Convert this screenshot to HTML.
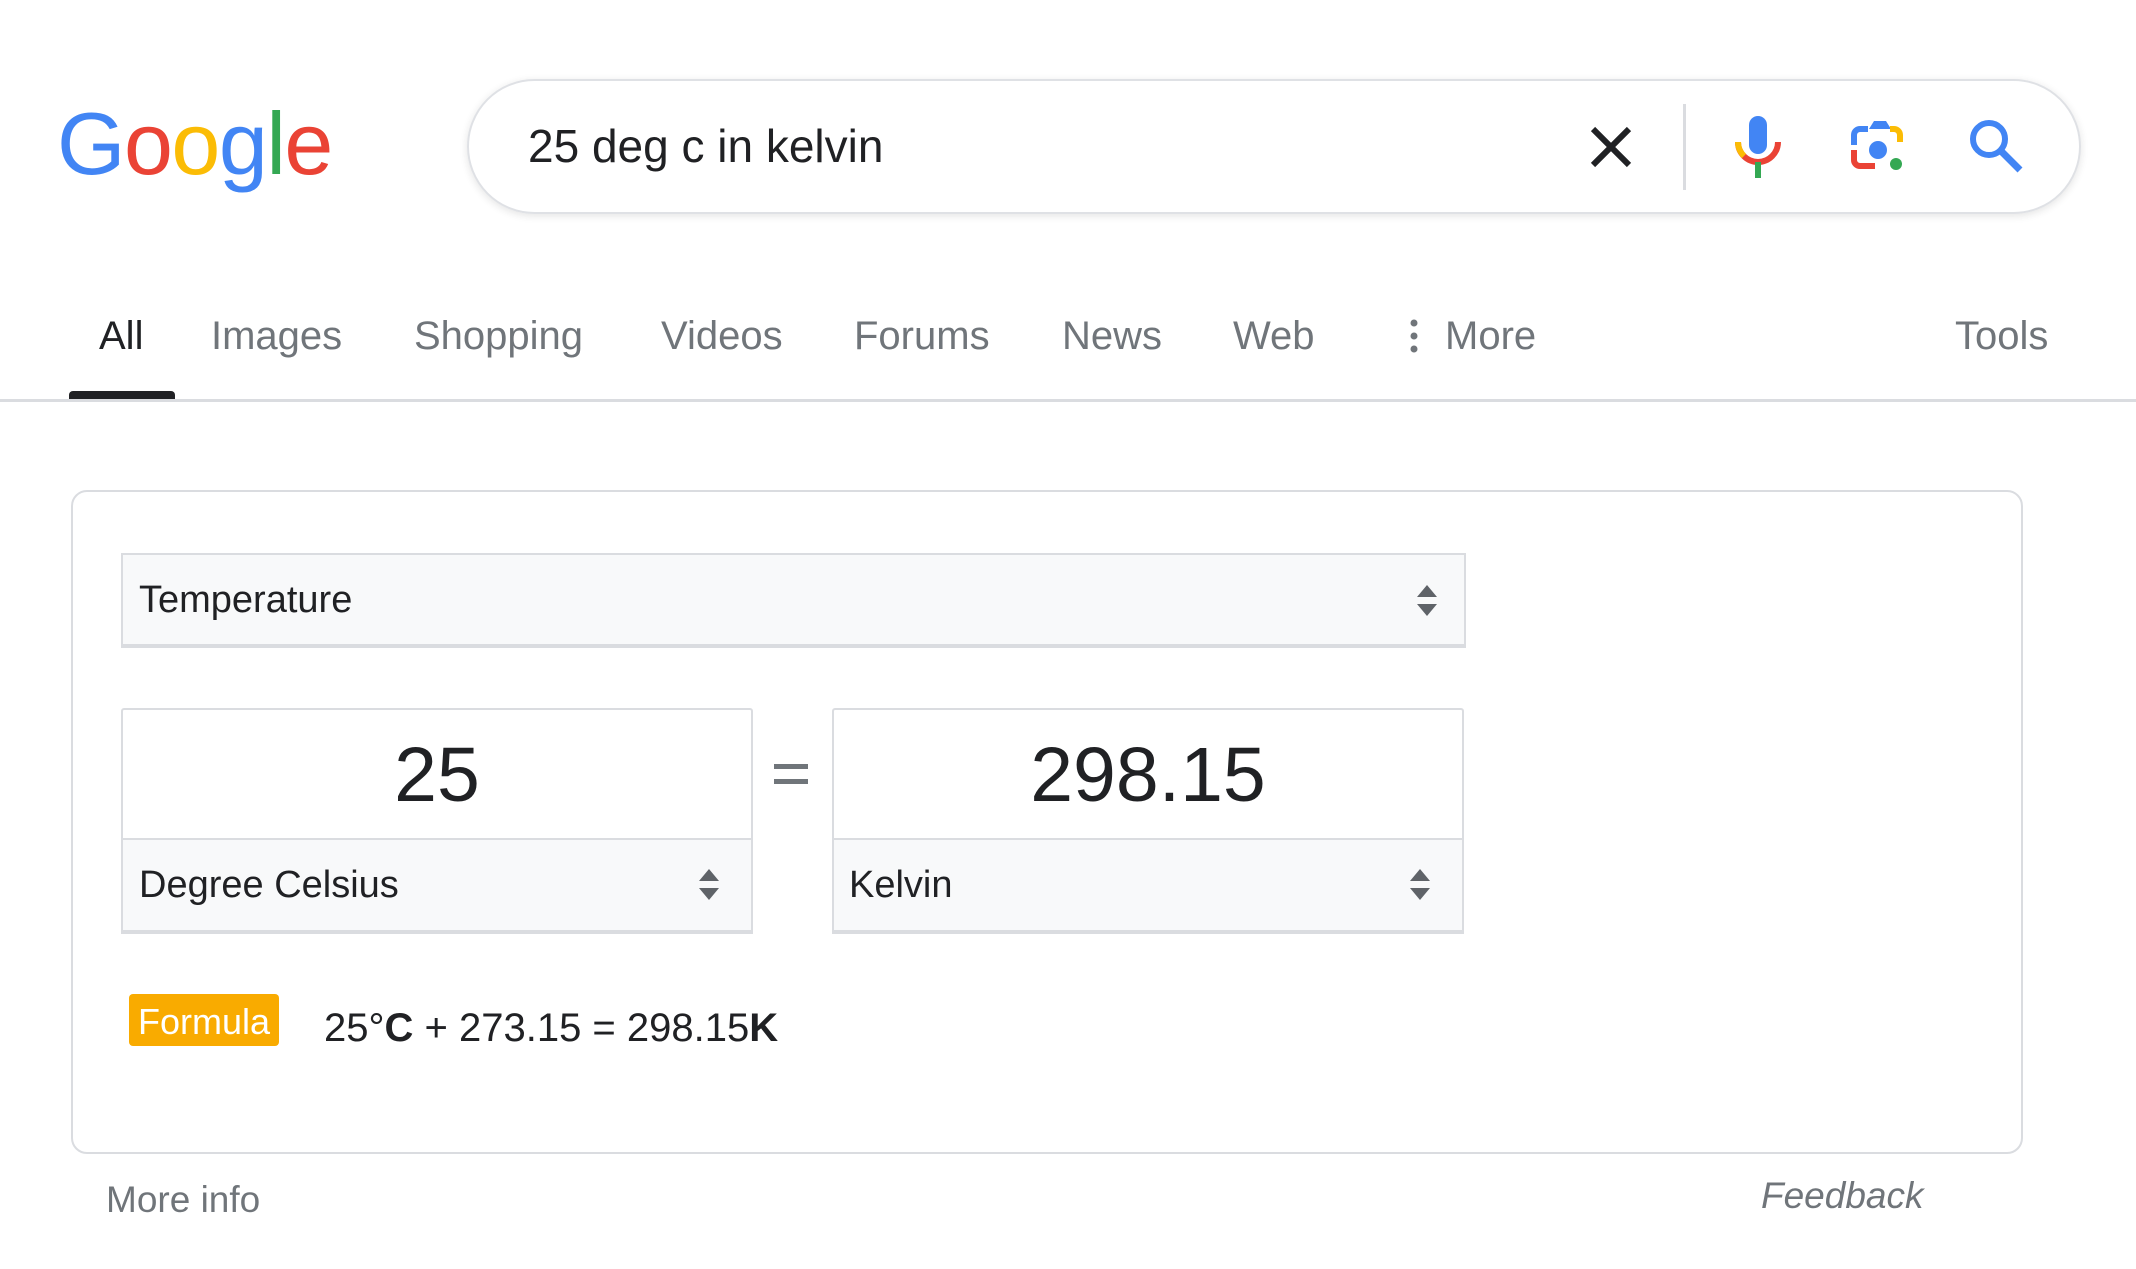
<!DOCTYPE html>
<html><head><meta charset="utf-8"><style>
*{margin:0;padding:0;box-sizing:border-box}
body{width:2136px;height:1269px;background:#fff;font-family:"Liberation Sans",Arial,sans-serif;position:relative;overflow:hidden}
.a{position:absolute;white-space:nowrap}
.logo{left:57px;top:100px;font-size:88px;letter-spacing:-1.5px;line-height:1}
.sb{left:467px;top:79px;width:1614px;height:135px;border:2px solid #dfe1e5;border-radius:68px;box-shadow:0 2px 8px rgba(32,33,36,.12)}
.q{left:528px;top:118px;font-size:46px;color:#202124;line-height:56px}
.tab{top:312px;font-size:40px;color:#70757a;line-height:48px}
.card{left:71px;top:490px;width:1952px;height:664px;border:2px solid #dadce0;border-radius:16px}
.sel{background:#f8f9fa;border:2px solid #dadce0;border-bottom-width:4px}
.lbl{font-size:38px;color:#202124;line-height:46px}
.box{border:2px solid #dadce0;border-bottom-width:4px;border-radius:3px}
.num{font-size:77px;color:#202124;text-align:center;line-height:90px}
.arr{position:absolute;width:0;height:0;border-left:10px solid transparent;border-right:10px solid transparent}
</style></head><body>
<div class="a logo"><span style="color:#4285f4">G</span><span style="color:#ea4335">o</span><span style="color:#fbbc05">o</span><span style="color:#4285f4">g</span><span style="color:#34a853">l</span><span style="color:#ea4335">e</span></div>
<div class="a sb"></div>
<div class="a q">25 deg c in kelvin</div>
<svg class="a" style="left:1588px;top:124px" width="46" height="46" viewBox="0 0 46 46"><path d="M5 5L41 41M41 5L5 41" stroke="#202124" stroke-width="6"/></svg>
<div class="a" style="left:1683px;top:104px;width:3px;height:86px;background:#dadce0"></div>
<svg class="a" style="left:1735px;top:114px" width="46" height="66" viewBox="0 0 46 66"><rect x="14" y="2" width="18" height="38" rx="9" fill="#4285f4"/><path d="M3 28a20 20 0 0 0 40 0" fill="none" stroke="#ea4335" stroke-width="6"/><path d="M3 28a20 20 0 0 0 6 14" fill="none" stroke="#fbbc05" stroke-width="6"/><rect x="20" y="48" width="6" height="16" fill="#34a853"/></svg>
<svg class="a" style="left:1849px;top:117px" width="58" height="60" viewBox="0 0 58 60"><path d="M5 28V18a6 6 0 0 1 6-6h8" fill="none" stroke="#4285f4" stroke-width="6"/><path d="M20 12l5-8h12l5 8z" fill="#4285f4"/><path d="M41 12h4a6 6 0 0 1 6 6v7" fill="none" stroke="#fbbc05" stroke-width="6"/><path d="M5 33v10a6 6 0 0 0 6 6h15" fill="none" stroke="#ea4335" stroke-width="6"/><circle cx="29" cy="33" r="9" fill="#4285f4"/><circle cx="47" cy="47" r="6" fill="#34a853"/></svg>
<svg class="a" style="left:1968px;top:118px" width="56" height="56" viewBox="0 0 56 56"><circle cx="21" cy="21" r="16" fill="none" stroke="#4285f4" stroke-width="6"/><path d="M33 33L52 52" stroke="#4285f4" stroke-width="7"/></svg>
<div class="a tab" style="left:99px;color:#202124">All</div>
<div class="a tab" style="left:211px">Images</div>
<div class="a tab" style="left:414px">Shopping</div>
<div class="a tab" style="left:661px">Videos</div>
<div class="a tab" style="left:854px">Forums</div>
<div class="a tab" style="left:1062px">News</div>
<div class="a tab" style="left:1233px">Web</div>
<svg class="a" style="left:1409px;top:318px" width="10" height="36"><circle cx="5" cy="5" r="3.5" fill="#70757a"/><circle cx="5" cy="18" r="3.5" fill="#70757a"/><circle cx="5" cy="31" r="3.5" fill="#70757a"/></svg>
<div class="a tab" style="left:1445px">More</div>
<div class="a tab" style="left:1955px">Tools</div>
<div class="a" style="left:69px;top:391px;width:106px;height:8px;background:#202124;border-radius:4px 4px 0 0"></div>
<div class="a" style="left:0;top:399px;width:2136px;height:3px;background:#dadce0"></div>
<div class="a card"></div>
<div class="a sel" style="left:121px;top:553px;width:1345px;height:95px"></div>
<div class="a lbl" style="left:139px;top:577px">Temperature</div>
<div class="arr" style="left:1417px;top:585px;border-bottom:12px solid #5f6368"></div><div class="arr" style="left:1417px;top:604px;border-top:12px solid #5f6368"></div>
<div class="a box" style="left:121px;top:708px;width:632px;height:226px"></div>
<div class="a sel" style="left:121px;top:838px;width:632px;height:96px;border-top-width:2px"></div>
<div class="a num" style="left:121px;top:730px;width:632px">25</div>
<div class="a lbl" style="left:139px;top:862px">Degree Celsius</div>
<div class="arr" style="left:699px;top:869px;border-bottom:12px solid #5f6368"></div><div class="arr" style="left:699px;top:888px;border-top:12px solid #5f6368"></div>
<div class="a" style="left:774px;top:764px;width:34px;height:5px;background:#70757a"></div>
<div class="a" style="left:774px;top:779px;width:34px;height:5px;background:#70757a"></div>
<div class="a box" style="left:832px;top:708px;width:632px;height:226px"></div>
<div class="a sel" style="left:832px;top:838px;width:632px;height:96px;border-top-width:2px"></div>
<div class="a num" style="left:832px;top:730px;width:632px">298.15</div>
<div class="a lbl" style="left:849px;top:862px">Kelvin</div>
<div class="arr" style="left:1410px;top:869px;border-bottom:12px solid #5f6368"></div><div class="arr" style="left:1410px;top:888px;border-top:12px solid #5f6368"></div>
<div class="a" style="left:129px;top:994px;width:150px;height:52px;background:#f9ab00;border-radius:4px;color:#fff;font-size:36px;line-height:56px;text-align:center">Formula</div>
<div class="a" style="left:324px;top:1004px;font-size:40px;color:#202124;line-height:48px">25°<b>C</b> + 273.15 = 298.15<b>K</b></div>
<div class="a" style="left:106px;top:1178px;font-size:37px;color:#70757a;line-height:44px">More info</div>
<div class="a" style="left:1761px;top:1174px;font-size:37px;color:#70757a;line-height:44px;font-style:italic">Feedback</div>
</body></html>
